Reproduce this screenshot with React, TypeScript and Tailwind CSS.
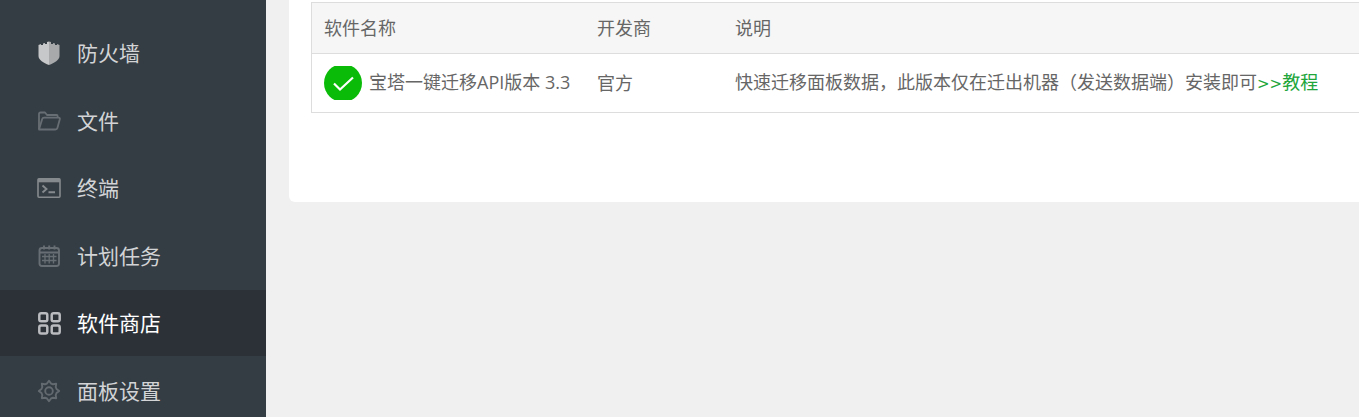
import type { ReactNode } from "react";

type MenuItem = {
  name: string;
  link: string;
  icon: ReactNode;
  active?: boolean;
};

const iconClass = "size-6 shrink-0";

const ShieldIcon = () => (
  <svg viewBox="0 0 24 24" className={iconClass}>
    <path d="M12 .5 10 1v2H8V2L6 2.5V4H4V3L1.500 4v11c0 4 5 7 10.500 9z" fill="#c6c8c9" />
    <path d="M12 .5 14 1v2h2V2l2 .5V4h2V3l2.500 1v11c0 4-5 7-10.500 9z" fill="#a7a9aa" />
  </svg>
);

const FolderIcon = () => (
  <svg viewBox="0 0 24 24" className={iconClass} fill="none" stroke="#686f74" strokeWidth="1.8" strokeLinejoin="round">
    <path d="M2 20V5q0-1.500 1.500-1.500H8l2 2.500h9.500q1.200 0 1.200 1.500V8.500" />
    <path d="M2 20.500 5.200 10q.4-1.300 1.800-1.300h14.500q1.700 0 1.300 1.600l-2.400 8.700q-.4 1.500-2 1.500z" />
  </svg>
);

const TerminalIcon = () => (
  <svg viewBox="0 0 24 24" className={iconClass} fill="none" stroke="#858a8e" strokeWidth="1.6">
    <rect x="1" y="2.800" width="22" height="18.400" rx="1" />
    <path d="M1 4.500h22" strokeWidth="3.600" />
    <path d="m5.500 9.500 4 3.500-4 3.500M11.500 16.200H18" strokeWidth="1.900" />
  </svg>
);

const CalendarIcon = () => (
  <svg viewBox="0 0 24 24" className={iconClass} fill="none" stroke="#686f74" strokeWidth="1.900">
    <rect x="2.500" y="4" width="19.500" height="18" rx="2.500" />
    <path d="M2.500 8.500H22M7 1.500v4M12.200 1.500v4M17.500 1.500v4" />
    <path d="M5 12.500h14.500M5 16.500h14.500M8 10v9.500M12.200 10v9.500M16.500 10v9.500" strokeWidth="1.300" />
  </svg>
);

const StoreIcon = () => (
  <svg viewBox="0 0 24 24" className={iconClass} fill="none" stroke="#b9bbbe" strokeWidth="2.500">
    <rect x="2.300" y="2.200" width="8" height="8" rx="1.800" />
    <rect x="14.700" y="2.200" width="8" height="8" rx="1.800" />
    <rect x="2.300" y="14.600" width="8" height="8" rx="1.800" />
    <rect x="14.700" y="14.600" width="8" height="8" rx="1.800" />
  </svg>
);

const GearIcon = () => (
  <svg viewBox="0 0 24 24" className={iconClass} fill="none" stroke="#636a70" strokeWidth="1.900" strokeLinejoin="round">
    <path d="M10 4.500 12 1.800 14 4.500 16 5.300 19.200 4.800 18.700 8 19.500 10 22.200 12 19.500 14 18.700 16 19.200 19.200 16 18.700 14 19.500 12 22.200 10 19.500 8 18.700 4.800 19.200 5.300 16 4.500 14 1.800 12 4.500 10 5.300 8 4.800 4.800 8 5.300z" />
    <circle cx="12" cy="12" r="3.800" />
  </svg>
);

const CheckIcon = () => (
  <svg viewBox="0 0 38 34" className="w-[38px] h-[34px] shrink-0">
    <circle cx="19" cy="17" r="19" fill="#0abb07" />
    <path d="m10 17.500 6 6L29 11.500" fill="none" stroke="#fff" strokeWidth="2.200" />
  </svg>
);

const menuItems: MenuItem[] = [
  { name: "防火墙", link: "#firewall", icon: <ShieldIcon /> },
  { name: "文件", link: "#files", icon: <FolderIcon /> },
  { name: "终端", link: "#terminal", icon: <TerminalIcon /> },
  { name: "计划任务", link: "#crontab", icon: <CalendarIcon /> },
  { name: "软件商店", link: "#soft", icon: <StoreIcon />, active: true },
  { name: "面板设置", link: "#config", icon: <GearIcon /> },
];

function Sidebar() {
  return (
    <nav className="w-[266px] shrink-0 bg-[#353d44] pt-5">
      <ul>
        {menuItems.map((item) => (
          <li key={item.link} className="odd:mb-0.5 even:mb-px">
            <a
              href={item.link}
              className={
                item.active
                  ? "flex items-center gap-4 h-[66px] pl-[37px] text-[21px] bg-[#2c3138] text-white"
                  : "flex items-center gap-4 h-[66px] pl-[37px] text-[21px] text-[#d2d4d6]"
              }
            >
              {item.icon}
              <span className="pt-0.5">{item.name}</span>
            </a>
          </li>
        ))}
      </ul>
    </nav>
  );
}

function SoftTable() {
  return (
    <table className="w-full table-fixed border-separate border-spacing-0 border-t border-l border-[#dddddd] text-left text-[18px] leading-6 text-[#666666]">
      <thead className="bg-[#f6f6f6]">
        <tr className="h-[51px]">
          <th className="w-[273px] border-b border-[#dddddd] px-3 font-normal">软件名称</th>
          <th className="w-[138px] border-b border-[#dddddd] px-3 font-normal">开发商</th>
          <th className="border-b border-[#dddddd] px-3 font-normal">说明</th>
        </tr>
      </thead>
      <tbody>
        <tr className="h-[59px]">
          <td className="border-b border-[#dddddd] pl-3">
            <div className="flex items-center gap-[7px] whitespace-nowrap">
              <CheckIcon />
              <span className="pb-0.5">宝塔一键迁移API版本 3.3</span>
            </div>
          </td>
          <td className="border-b border-[#dddddd] px-3">官方</td>
          <td className="border-b border-[#dddddd] pl-3 whitespace-nowrap">
            快速迁移面板数据，此版本仅在迁出机器（发送数据端）安装即可
            <a href="#tutorial" className="text-[#20a53a]">
              <span className="font-['DejaVu_Sans'] text-[15px]">&gt;&gt;</span>教程
            </a>
          </td>
        </tr>
      </tbody>
    </table>
  );
}

export default function App() {
  return (
    <div
      lang="zh-CN"
      className="flex h-screen overflow-hidden bg-[#f0f0f0] font-['Open_Sans','Noto_Sans_CJK_SC',sans-serif] font-normal"
    >
      <Sidebar />
      <main className="min-w-0 flex-1 pl-[23px]">
        <section className="rounded-bl-md bg-white pt-0.5 pl-[22px] pb-[89px]">
          <SoftTable />
        </section>
      </main>
    </div>
  );
}
